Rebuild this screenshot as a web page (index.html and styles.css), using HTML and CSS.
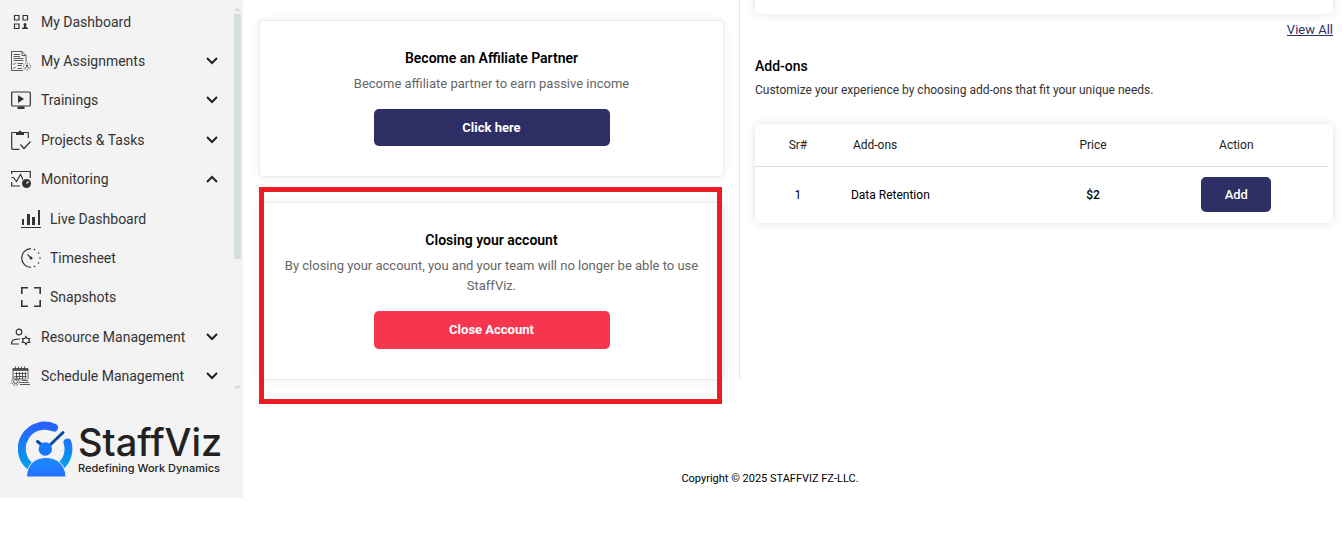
FILE: index.html
```html
<!DOCTYPE html>
<html lang="en">
<head>
    <meta charset="utf-8">
    <title>StaffViz</title>
    <link rel="stylesheet" href="styles.css">
</head>
<body>
    <div class="wrapper">
        <aside class="sidebar">
            <div class="nav-area">
                <ul class="nav">
                    <li><a href="#">
                        <svg class="icon" viewBox="0 0 20 20"><path d="M3.500 3.500h4.500v4.500h-4.500zM12 3.500h4.500v4.500h-4.500zM3.500 12h4.500v4.500h-4.500z"/><circle class="fill" cx="14" cy="12.500" r="1.500"/><path class="fill" d="M11 17v-1l2-1v-2h2v2l2 1v1z"/></svg>
                        <span>My Dashboard</span></a></li>
                    <li><a href="#">
                        <svg class="icon thin" viewBox="0 0 20 20"><path d="M12 19.500H.5V.5H11l4 4V11M11 .5v4h4M2.500 3.500H9M2.500 5.500H9M2.500 7.500h10M2.500 9.500h10M2 12.500l1 1 2-2M2 16.500l1 1 2-2M6.500 12.500H12M6.500 14.500H11M6.500 17.500H11"/><circle cx="16" cy="15.500" r="3.500" stroke-dasharray="1 1"/><circle class="fill" cx="16" cy="14.500" r="1"/><path d="M14 17.500c0-2 4-2 4 0"/></svg>
                        <span>My Assignments</span>
                        <svg class="chevron" viewBox="0 0 12 8"><path d="M1 1l5 5 5-5"/></svg></a></li>
                    <li><a href="#">
                        <svg class="icon" viewBox="0 0 20 20"><rect x=".7" y="2" width="18.600" height="14" rx="1"/><path class="fill" d="M7 5v8l6-4zM6.500 16.500h7v2.500h-7z"/></svg>
                        <span>Trainings</span>
                        <svg class="chevron" viewBox="0 0 12 8"><path d="M1 1l5 5 5-5"/></svg></a></li>
                    <li><a href="#">
                        <svg class="icon" viewBox="0 0 20 20"><path d="M5 2.500H1.500q-.8 0-.8.8v15.200q0 .8.800.8h7M13 2.500h3.500q.8 0 .8.8V8M9.500 14.500l3.500 4 6.500-7"/><path class="fill" d="M5 2h2.500q.5-1.500 1.500-1.500t1.500 1.500H13v3H5z"/></svg>
                        <span>Projects &amp; Tasks</span>
                        <svg class="chevron" viewBox="0 0 12 8"><path d="M1 1l5 5 5-5"/></svg></a></li>
                    <li><a href="#">
                        <svg class="icon" viewBox="0 0 20 20"><path d="M.7 5V2.500H19.300V9M.7 13v4H9M.5 8.500h2l3 4 4-7 2.500 5"/><circle class="fill" cx="15.500" cy="14.500" r="4.500"/><path class="spark" d="M15.500 14.500l2-2"/></svg>
                        <span>Monitoring</span>
                        <svg class="chevron" viewBox="0 0 12 8"><path d="M1 7l5-5 5 5"/></svg></a></li>
                    <li class="sub"><a href="#">
                        <svg class="icon" viewBox="0 0 20 20"><path class="fill" d="M1 10h2v6H1zM6 5h3v11H6zM11 8h3v8h-3zM17 1h2v15h-2zM0 18h20v1H0z"/></svg>
                        <span>Live Dashboard</span></a></li>
                    <li class="sub"><a href="#">
                        <svg class="icon" viewBox="0 0 20 20"><path d="M10 .7a9.300 9.300 0 0 0 0 18.600M6.500 6.500l3.500 3.500"/><circle class="fill" cx="10" cy="10" r="1.500"/><path class="dots" d="M13.500 1.500h.1M17.500 5h.1M19 10h.1M17.500 15h.1M13.500 18.500h.1"/></svg>
                        <span>Timesheet</span></a></li>
                    <li class="sub"><a href="#">
                        <svg class="icon frame" viewBox="0 0 20 20"><path d="M.8 7V.8H7M13 .8h6.200V7M19.200 13v6.200H13M7 19.200H.8V13"/></svg>
                        <span>Snapshots</span></a></li>
                    <li><a href="#">
                        <svg class="icon" viewBox="0 0 20 20"><circle cx="8" cy="5" r="2.800"/><path d="M8 17H.7v-1.500c0-3 3-3.500 8.300-3.500"/><path d="M15 9.500l1.200 2 2.500 0-1 2 1 2-2.500 0-1.200 2-1.200-2-2.500 0 1-2-1-2 2.500 0z"/></svg>
                        <span>Resource Management</span>
                        <svg class="chevron" viewBox="0 0 12 8"><path d="M1 1l5 5 5-5"/></svg></a></li>
                    <li><a href="#">
                        <svg class="icon thin" viewBox="0 0 20 20"><path d="M2 13V2.500h15V13M2 4.500h15M2 3.500h15M4.500.5v3M7.500.5v3M10.500.5v3M13.500.5v3M3.500 7.500h12M3.500 10.500h12M3.500 13h12M5.500 6v6M8.500 6v7M11.500 6v7M14.500 6v6M9 18.500h10M9 16.500h9M11 14.500h6"/><circle cx="4.500" cy="15.500" r="3.800" stroke-dasharray="2 1"/><circle cx="4.500" cy="15.500" r="2"/></svg>
                        <span>Schedule Management</span>
                        <svg class="chevron" viewBox="0 0 12 8"><path d="M1 1l5 5 5-5"/></svg></a></li>
                </ul>
                <div class="scroll">
                    <div class="arrow-up"></div>
                    <div class="thumb"></div>
                    <div class="arrow-down"></div>
                </div>
            </div>
            <a class="logo" href="#">
                <svg viewBox="0 0 56 56">
                    <defs>
                        <linearGradient id="ring" gradientUnits="userSpaceOnUse" x1="0" y1="0" x2="0" y2="50">
                            <stop offset="0" stop-color="#2c5cff"/><stop offset="1" stop-color="#00a5ea"/>
                        </linearGradient>
                        <linearGradient id="man" x1="0" y1="0" x2="0" y2="1">
                            <stop offset="0" stop-color="#1c8cff"/><stop offset="1" stop-color="#2370ff"/>
                        </linearGradient>
                    </defs>
                    <path class="ring" d="M36 6.600A23 23 0 0 0 12 45.300M49.500 21.500A23 23 0 0 1 43.600 44.300"/>
                    <path class="hands" d="M45 11.500L32 24M19.500 20.500L25 25"/>
                    <circle cx="27.300" cy="28" r="6.700" fill="#1877ff"/>
                    <path d="M8.500 56C9 43 17 36.500 28 36.500S47.500 43 48 56z" fill="url(#man)" stroke="#f3f3f3"/>
                </svg>
                <span class="brand">
                    <span class="name">StaffViz</span>
                    <span class="slogan">Redefining Work Dynamics</span>
                </span>
            </a>
        </aside>

        <main class="main">
            <div class="columns">
                <div class="left">
                    <section class="card previous"></section>
                    <section class="card">
                        <h2>Become an Affiliate Partner</h2>
                        <p>Become affiliate partner to earn passive income</p>
                        <button type="button" class="wide">Click here</button>
                    </section>
                    <section class="card marked">
                        <h2>Closing your account</h2>
                        <p>By closing your account, you and your team will no longer be able to use StaffViz.</p>
                        <button type="button" class="wide danger">Close Account</button>
                    </section>
                </div>
                <div class="right">
                    <section class="panel previous"></section>
                    <a class="view-all" href="#">View All</a>
                    <h2>Add-ons</h2>
                    <p>Customize your experience by choosing add-ons that fit your unique needs.</p>
                    <div class="panel">
                        <table>
                            <thead>
                                <tr><th class="sr">Sr#</th><th class="addon">Add-ons</th><th class="price">Price</th><th>Action</th></tr>
                            </thead>
                            <tbody>
                                <tr><td>1</td><td class="addon">Data Retention</td><td class="cost">$2</td><td><button type="button">Add</button></td></tr>
                            </tbody>
                        </table>
                    </div>
                </div>
            </div>
            <footer>Copyright © 2025 STAFFVIZ FZ-LLC.</footer>
        </main>
    </div>
</body>
</html>
```
FILE: styles.css
```css
* {
    box-sizing: border-box;
}
body {
    margin: 0;
    font: 14px/20px Roboto, sans-serif;
    color: #000;
    background: #fff;
}
h2, p, ul {
    margin: 0;
    padding: 0;
}
h2 {
    font-size: 14px;
    font-weight: 500;
}
button {
    font: 500 13px/20px Roboto, sans-serif;
    color: #fff;
    background: #2c2e64;
    border: none;
    border-radius: 5px;
    cursor: pointer;
}
.wrapper {
    display: flex;
    align-items: flex-start;
}

/* sidebar */
.sidebar {
    flex: none;
    width: 243px;
    padding-bottom: 21px;
    background: #f3f3f3;
}
.nav-area {
    display: flex;
    height: 396px;
}
.nav {
    flex: 1;
    display: grid;
    grid-auto-rows: 1fr;
    height: 394px;
    margin-top: 2px;
    list-style: none;
}
.nav a {
    display: flex;
    align-items: center;
    gap: 10px;
    height: 100%;
    padding: 0 16px 0 11px;
    color: #333;
    text-decoration: none;
}
.nav .sub a {
    gap: 9px;
    padding-left: 21px;
}
.icon {
    flex: none;
    width: 20px;
    height: 20px;
    fill: none;
    stroke: #333;
    stroke-width: 1.2;
}
.thin {
    stroke-width: 0.8;
}
.frame {
    stroke-width: 1.6;
}
.icon .fill {
    fill: #333;
    stroke: none;
}
.dots {
    stroke-width: 1.6;
    stroke-linecap: round;
}
.spark {
    stroke: #f3f3f3;
}
.chevron {
    width: 12px;
    height: 8px;
    margin-left: auto;
    fill: none;
    stroke: #222;
    stroke-width: 2;
}
.scroll {
    display: flex;
    flex-direction: column;
    width: 7px;
    height: 389px;
    margin-right: 2px;
    padding-top: 8px;
}
.arrow-up, .arrow-down {
    border: 3px solid transparent;
}
.arrow-up {
    border-top: none;
    border-bottom-color: #d5dce0;
}
.arrow-down {
    margin-top: auto;
    border-bottom: none;
    border-top-color: #d5dce0;
}
.thumb {
    height: 245px;
    margin-top: 3px;
    background: #d5dde0;
}
.logo {
    display: flex;
    gap: 4px;
    margin: 25px 0 0 18px;
    color: #222;
    text-decoration: none;
}
.logo svg {
    flex: none;
    width: 56px;
    height: 56px;
}
.ring {
    fill: none;
    stroke: url(#ring);
    stroke-width: 8;
    stroke-linecap: round;
}
.hands {
    fill: none;
    stroke: #064b9c;
    stroke-width: 3;
    stroke-linecap: round;
}
.brand {
    display: flex;
    flex-direction: column;
}
.name {
    font: 500 38px/42px Inter, sans-serif;
}
.slogan {
    font: 500 11px/10px Inter, sans-serif;
}

/* content */
.main {
    flex: 1;
    min-width: 0;
}
.columns {
    display: flex;
    align-items: stretch;
    margin-top: -20px;
}
.left {
    flex: none;
    width: 45.182%;
    padding: 0 15px 0 16px;
    border-right: 1px solid #e6e6e6;
}
.card {
    position: relative;
    margin-bottom: 25px;
    padding: 27px 20px 30px;
    text-align: center;
    border: 1px solid #ececec;
    border-radius: 4px;
    box-shadow: 0 0 10px rgba(0, 0, 0, 0.08);
}
.card:last-child {
    margin-bottom: 0;
}
.card.previous {
    height: 15px;
    padding: 0;
}
.card h2 {
    font-weight: 600;
}
.card p {
    margin: 6px 0 15px;
    font-size: 13px;
    color: #666;
}
.marked::after {
    content: "";
    position: absolute;
    inset: -16px 1px -25px -1px;
    border: 5px solid #ed1c24;
    pointer-events: none;
}
.wide {
    width: 236px;
    height: 37px;
    font-weight: 700;
}
.danger {
    height: 38px;
    background: #f5364e;
}
.right {
    flex: 1;
    display: flex;
    flex-direction: column;
    padding: 0 10px 0 15px;
}
.panel {
    border-radius: 5px;
    box-shadow: 0 0 10px rgba(0, 0, 0, 0.12);
}
.panel.previous {
    height: 34px;
}
.view-all {
    align-self: flex-end;
    margin: 6px 0 16px;
    font-size: 13px;
    color: #2c2e64;
}
.right p {
    margin: 4px 0 24px;
    font-size: 12px;
    color: #333;
}
table {
    width: calc(100% - 5px);
    border-collapse: collapse;
    table-layout: fixed;
    font-size: 12px;
    text-align: center;
}
th {
    height: 42px;
    padding: 0;
    font-weight: 400;
    color: #222;
    border-bottom: 1px solid #dcdce4;
}
td {
    height: 57px;
    padding: 0;
}
.sr {
    width: 15%;
}
.price {
    width: 18%;
}
.addon {
    width: 35%;
    padding-left: 12px;
    text-align: left;
}
td.addon {
    padding-left: 10px;
}
.cost {
    font-weight: 500;
}
td button {
    width: 70px;
    height: 35px;
}
footer {
    margin-top: 89px;
    padding-right: 46px;
    font-size: 11px;
    text-align: center;
}
```
